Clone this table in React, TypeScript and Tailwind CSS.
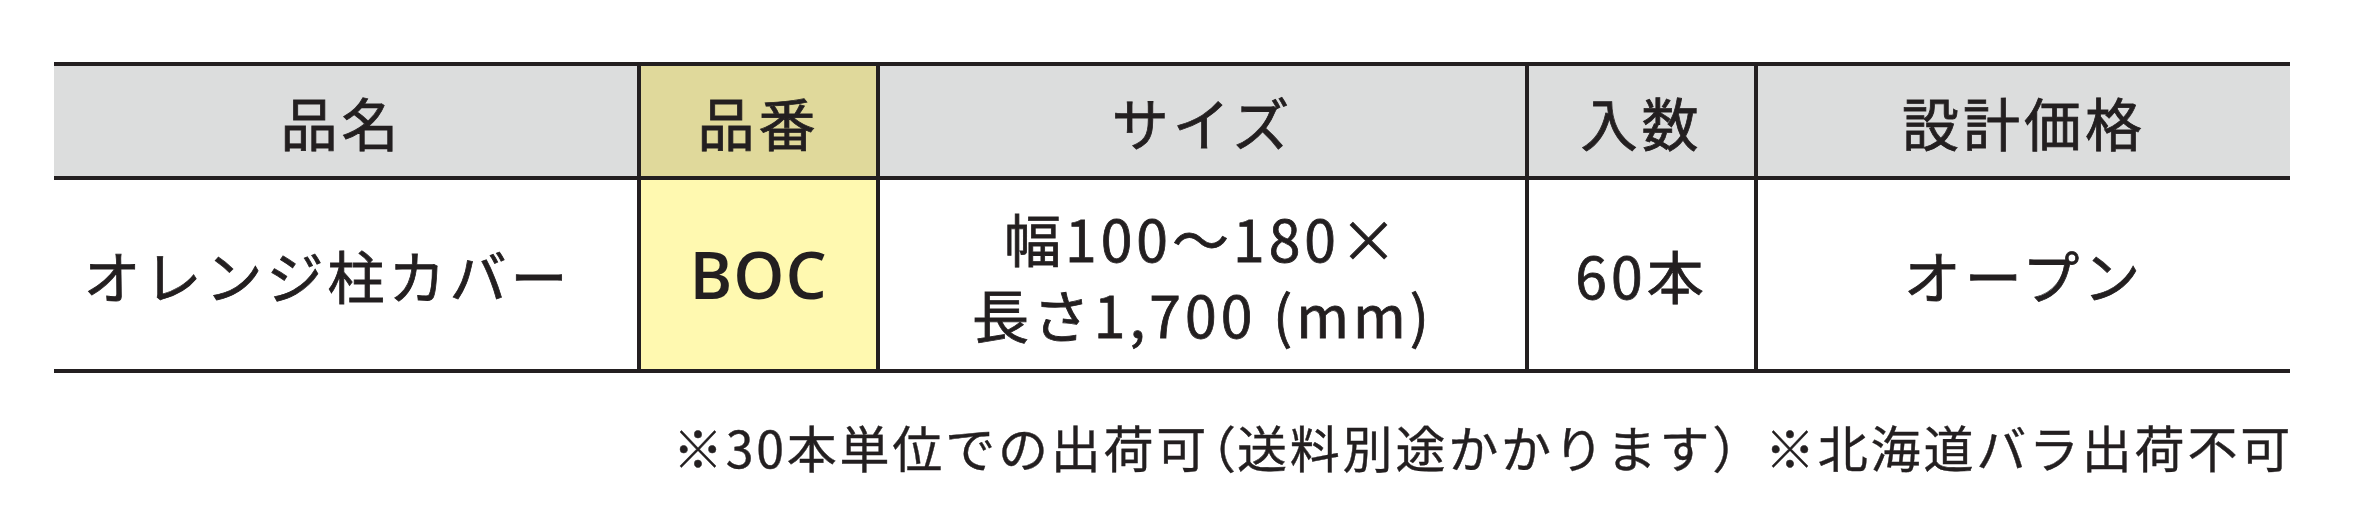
export default function App() {
  const jp = "font-['Noto_Sans_CJK_JP',sans-serif]";
  const stroke = "[-webkit-text-stroke:0.8px_#231f20]";

  return (
    <div className={`w-[2358px] h-[528px] bg-white pt-[62px] text-[#231f20] ${jp}`}>
      <div className="ml-[54px] w-[2236px] border-y-4 border-[#231f20]">
        {/* header */}
        <div className={`grid grid-cols-[583px_239px_649px_229px_536px] h-[114px] border-b-4 border-[#231f20] bg-[#dcdddd] text-[57px] tracking-[4px] leading-none ${stroke}`}>
          <div className="flex items-center justify-center pr-[8px]">品名</div>
          <div className="flex items-center justify-center border-l-4 border-[#231f20] bg-[#e0d99b]">品番</div>
          <div className="flex items-center justify-center border-l-4 border-[#231f20]">サイズ</div>
          <div className="flex items-center justify-center border-l-4 border-[#231f20]">入数</div>
          <div className="flex items-center justify-center border-l-4 border-[#231f20]">設計価格</div>
        </div>

        {/* body */}
        <div className={`grid grid-cols-[583px_239px_649px_229px_536px] h-[189px] text-[57px] tracking-[4px] ${stroke}`}>
          <div className="flex items-center justify-center pr-[36px]">オレンジ柱カバー</div>
          <div className="flex items-center justify-center border-l-4 border-[#231f20] bg-[#fff9b0]">
            <span className="font-['Open_Sans',sans-serif] text-[65px] font-semibold tracking-[1px] [-webkit-text-stroke:0px]">BOC</span>
          </div>
          <div className="flex flex-col items-center justify-center border-l-4 border-[#231f20] leading-[76px]">
            <span>幅100〜180×</span>
            <span>長さ1,700 (mm)</span>
          </div>
          <div className="flex items-center justify-center border-l-4 border-[#231f20]">60本</div>
          <div className="flex items-center justify-center border-l-4 border-[#231f20]">オープン</div>
        </div>
      </div>

      <p className="mt-[36px] w-[2293px] text-right text-[50px] leading-[75px] tracking-[2.8px] [-webkit-text-stroke:0.4px_#231f20]">
        ※30本単位での出荷可<span className="[font-feature-settings:'palt']">（</span>送料別途かかります）※北海道バラ出荷不可
      </p>
    </div>
  );
}
